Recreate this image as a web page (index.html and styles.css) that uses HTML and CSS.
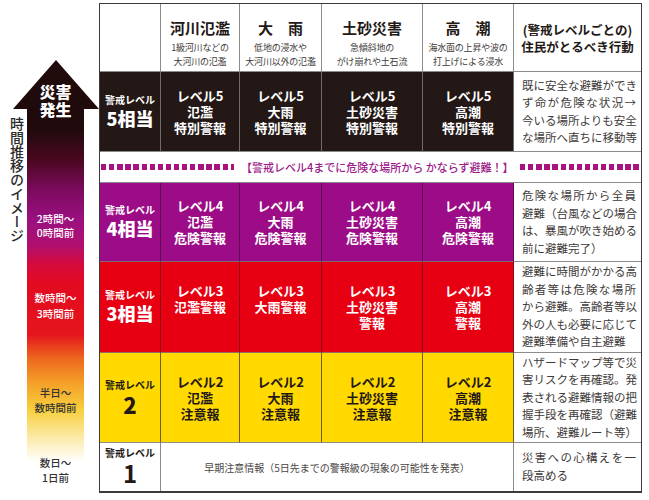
FILE: index.html
```html
<!DOCTYPE html>
<html lang="ja">
<head>
<meta charset="utf-8">
<link rel="stylesheet" href="styles.css">
</head>
<body>
<div class="page">
  <div class="timeline">
    <svg class="arrow" width="99" height="497" viewBox="0 0 99 497">
      <defs>
        <linearGradient id="g" x1="0" y1="60" x2="0" y2="470" gradientUnits="userSpaceOnUse">
          <stop offset="0" stop-color="#1f0c0b"/>
          <stop offset="0.17" stop-color="#200a0c"/>
          <stop offset="0.244" stop-color="#4a0820"/>
          <stop offset="0.317" stop-color="#7c0b5e"/>
          <stop offset="0.39" stop-color="#9a1080"/>
          <stop offset="0.45" stop-color="#b00f70"/>
          <stop offset="0.5" stop-color="#d60a3c"/>
          <stop offset="0.549" stop-color="#e30a20"/>
          <stop offset="0.67" stop-color="#e4161c"/>
          <stop offset="0.73" stop-color="#ee6a1e"/>
          <stop offset="0.793" stop-color="#f4a42a"/>
          <stop offset="0.854" stop-color="#f8cf3e"/>
          <stop offset="0.915" stop-color="#fbe8a0"/>
          <stop offset="0.98" stop-color="#ffffff"/>
        </linearGradient>
      </defs>
      <path d="M56 60 L99 109 L84 109 L84 472 L27 472 L27 109 L13 109 Z" fill="url(#g)"/>
    </svg>
    <div class="vtext">時間推移のイメージ</div>
    <div class="tl tl-top">災害<br>発生</div>
    <div class="tl tl-a">2時間〜<br>0時間前</div>
    <div class="tl tl-b">数時間〜<br>3時間前</div>
    <div class="tl tl-c dark">半日〜<br>数時間前</div>
    <div class="tl tl-d dark">数日〜<br>1日前</div>
  </div>

  <div class="table">
    <!-- header -->
    <div class="c h"></div>
    <div class="c h"><div class="ttl">河川氾濫</div><div class="sub">1級河川などの<br>大河川の氾濫</div></div>
    <div class="c h"><div class="ttl">大　雨</div><div class="sub">低地の浸水や<br>大河川以外の氾濫</div></div>
    <div class="c h"><div class="ttl">土砂災害</div><div class="sub">急傾斜地の<br>がけ崩れや土石流</div></div>
    <div class="c h"><div class="ttl">高　潮</div><div class="sub">海水面の上昇や波の<br>打上げによる浸水</div></div>
    <div class="c h hact">(警戒レベルごとの)<br>住民がとるべき行動</div>

    <!-- level 5 -->
    <div class="c k l5"><span class="ks">警戒レベル</span><span class="kb">5相当</span></div>
    <div class="c w l5"><div class="in">レベル5<br>氾濫<br>特別警報</div></div>
    <div class="c w l5"><div class="in">レベル5<br>大雨<br>特別警報</div></div>
    <div class="c w l5"><div class="in">レベル5<br>土砂災害<br>特別警報</div></div>
    <div class="c w l5"><div class="in">レベル5<br>高潮<br>特別警報</div></div>
    <div class="c act"><span class="ln">既に安全な避難ができ</span><span class="ln">ず命が危険な状況→</span><span class="ln">今いる場所よりも安全</span><span class="ln">な場所へ直ちに移動等</span></div>

    <!-- banner -->
    <div class="banner">
      <span class="dash dl"></span>
      <span class="btxt">【警戒レベル4までに危険な場所から かならず避難！】</span>
      <span class="dash dr"></span>
    </div>

    <!-- level 4 -->
    <div class="c k l4"><span class="ks">警戒レベル</span><span class="kb">4相当</span></div>
    <div class="c w l4"><div class="in">レベル4<br>氾濫<br>危険警報</div></div>
    <div class="c w l4"><div class="in">レベル4<br>大雨<br>危険警報</div></div>
    <div class="c w l4"><div class="in">レベル4<br>土砂災害<br>危険警報</div></div>
    <div class="c w l4"><div class="in">レベル4<br>高潮<br>危険警報</div></div>
    <div class="c act"><span class="ln">危険な場所から全員</span><span class="ln">避難（台風などの場合</span><span class="ln">は、暴風が吹き始める</span><span class="ln e">前に避難完了）</span></div>

    <!-- level 3 -->
    <div class="c k l3"><span class="ks">警戒レベル</span><span class="kb">3相当</span></div>
    <div class="c w l3"><div class="in">レベル3<br>氾濫警報</div></div>
    <div class="c w l3"><div class="in">レベル3<br>大雨警報</div></div>
    <div class="c w l3"><div class="in">レベル3<br>土砂災害<br>警報</div></div>
    <div class="c w l3"><div class="in">レベル3<br>高潮<br>警報</div></div>
    <div class="c act"><span class="ln">避難に時間がかかる高</span><span class="ln">齢者等は危険な場所</span><span class="ln">から避難。高齢者等以</span><span class="ln">外の人も必要に応じて</span><span class="ln e">避難準備や自主避難</span></div>

    <!-- level 2 -->
    <div class="c k l2"><span class="ks">警戒レベル</span><span class="kb k2">2</span></div>
    <div class="c w l2"><div class="in">レベル2<br>氾濫<br>注意報</div></div>
    <div class="c w l2"><div class="in">レベル2<br>大雨<br>注意報</div></div>
    <div class="c w l2"><div class="in">レベル2<br>土砂災害<br>注意報</div></div>
    <div class="c w l2"><div class="in">レベル2<br>高潮<br>注意報</div></div>
    <div class="c act"><span class="ln">ハザードマップ等で災</span><span class="ln">害リスクを再確認。発</span><span class="ln">表される避難情報の把</span><span class="ln">握手段を再確認（避難</span><span class="ln e">場所、避難ルート等）</span></div>

    <!-- level 1 -->
    <div class="c k l1 last"><span class="ks">警戒レベル</span><span class="kb k1">1</span></div>
    <div class="c early last">早期注意情報（5日先までの警報級の現象の可能性を発表）</div>
    <div class="c act act1 last"><span class="ln">災害への心構えを一</span><span class="ln e">段高める</span></div>
  </div>
</div>
</body>
</html>
```

FILE: styles.css
```css
* { box-sizing: border-box; }

html, body {
  margin: 0;
  padding: 0;
  background: #ffffff;
}

body {
  font-family: "Noto Sans CJK JP", "Noto Sans", sans-serif;
  color: #231815;
}

.page {
  display: flex;
  width: 649px;
  height: 500px;
}

/* ---------- timeline arrow (diagram) ---------- */
.timeline {
  position: relative;
  width: 99px;
  height: 497px;
  flex: none;
}

.arrow {
  position: absolute;
  left: 0;
  top: 0;
  display: block;
}

.vtext {
  position: absolute;
  left: 9px;
  top: 117px;
  writing-mode: vertical-rl;
  font-size: 14px;
  line-height: 16px;
  font-weight: 500;
  color: #2b2b2b;
  letter-spacing: 0;
}

.tl {
  position: absolute;
  left: 27px;
  width: 57px;
  text-align: center;
  color: #ffffff;
  font-size: 10.5px;
  line-height: 14px;
  font-weight: 500;
}

.tl.dark { color: #333333; }

.tl-top {
  top: 82px;
  font-size: 16px;
  line-height: 18px;
  font-weight: 900;
}

.tl-a { top: 212px; }
.tl-b { top: 290px; line-height: 16px; }
.tl-c { top: 385px; line-height: 15px; }
.tl-d { top: 455px; line-height: 15px; }

/* ---------- table ---------- */
.table {
  margin-top: 3px;
  display: grid;
  grid-template-columns: 61px 79px 82px 101px 91px 127px;
  grid-template-rows: 68px 80px 31px 79px 91px 90px 48px;
  border: 1px solid #3a3a3a;
  border-bottom-width: 2px;
  border-right-width: 1.5px;
  align-self: flex-start;
}

.c {
  border-right: 1px solid #8c8c8c;
  border-bottom: 1px solid #8c8c8c;
}

.h {
  background: #ffffff;
  text-align: center;
  padding-top: 14px;
}

.ttl {
  font-size: 15px;
  line-height: 20px;
  font-weight: 700;
  color: #231815;
}

.sub {
  margin-top: 3px;
  font-size: 9px;
  line-height: 13.5px;
  color: #3e3a39;
  letter-spacing: -0.2px;
  white-space: nowrap;
}

.hact {
  border-right: none;
  padding-top: 0;
  display: flex;
  align-items: center;
  justify-content: center;
  font-size: 12.5px;
  line-height: 17px;
  font-weight: 700;
}

/* level column */
.k {
  display: flex;
  flex-direction: column;
  align-items: center;
  justify-content: center;
  font-weight: 700;
  padding-bottom: 2px;
}

.ks {
  font-size: 10px;
  line-height: 14px;
}

.kb {
  font-size: 18px;
  line-height: 22px;
  font-weight: 900;
}

.k2 { font-size: 22px; line-height: 24px; }
.k1 { font-size: 24px; line-height: 26px; font-weight: 700; }

/* warning cells */
.w {
  display: flex;
  align-items: center;
  justify-content: center;
}

.w .in {
  height: 48px;
  text-align: center;
  font-size: 13px;
  line-height: 16px;
  font-weight: 700;
}

.l5 {
  background: #231815;
  color: #ffffff;
  border-right-color: #6f6b6a;
  border-bottom-color: #8c8c8c;
}

.l4 {
  background: #9c0c86;
  color: #ffffff;
  border-right-color: #5e0a52;
  border-bottom-color: #7a6a76;
}

.l3 {
  background: #e60012;
  color: #ffffff;
  border-right-color: #8a0a14;
  border-bottom-color: #8a6a6a;
}

.l2 {
  background: #ffd900;
  color: #231815;
  border-right-color: #6e5e10;
  border-bottom-color: #8c8c8c;
}

.l1 {
  background: #ffffff;
  color: #231815;
}

/* action column */
.act {
  border-right: none;
  background: #ffffff;
  padding: 0 5px 0 8px;
  display: flex;
  flex-direction: column;
  justify-content: center;
  font-size: 11.5px;
  line-height: 17.5px;
  color: #3e3a39;
}

.act .ln {
  display: block;
  white-space: nowrap;
  text-align: justify;
  text-align-last: justify;
}

.act .ln.e { text-align-last: auto; }

.act1 {
  justify-content: flex-start;
  padding-top: 6px;
}

.last { border-bottom: none; }

/* banner */
.banner {
  grid-column: 1 / -1;
  display: flex;
  align-items: center;
  background: #ffffff;
  border-bottom: 1px solid #8c8c8c;
  padding-left: 1px;
}

.dash {
  height: 6px;
  background: repeating-linear-gradient(90deg, #a8127e 0 5.3px, transparent 5.3px 8.1px);
}

.dl { width: 133px; flex: none; }
.dr { flex: 1; }

.btxt {
  margin: 0 6px 0 7px;
  font-size: 11px;
  line-height: 14px;
  color: #9b1a87;
  font-weight: 500;
  white-space: nowrap;
}

/* level 1 early info */
.early {
  grid-column: 2 / 6;
  display: flex;
  align-items: center;
  justify-content: center;
  font-size: 10px;
  color: #4a4544;
  white-space: nowrap;
  background: #ffffff;
}
```
